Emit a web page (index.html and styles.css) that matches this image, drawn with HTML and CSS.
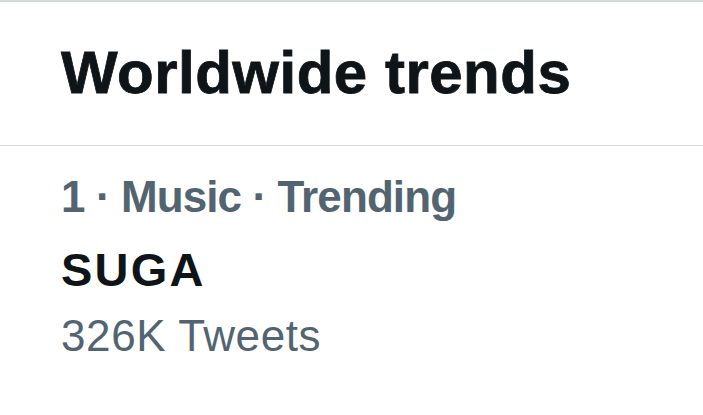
FILE: index.html
```html
<!DOCTYPE html>
<html>
<head>
<meta charset="utf-8">
<link rel="stylesheet" href="styles.css">
</head>
<body>
<div class="panel">
  <header class="panel-head">
    <h1 class="title">Worldwide trends</h1>
  </header>
  <section class="trend">
    <div class="meta">1 · Music · Trending</div>
    <div class="name">SUGA</div>
    <div class="count">326K Tweets</div>
  </section>
</div>
</body>
</html>
```
FILE: styles.css
```css
html, body {
  margin: 0;
  padding: 0;
  background: #ffffff;
}
body {
  font-family: "Liberation Sans", Arial, sans-serif;
  width: 703px;
  height: 415px;
  overflow: hidden;
}
.panel {
  border-top: 2px solid #d3d8dc;
}
.panel-head {
  padding: 41px 0 42px 61px;
  border-bottom: 1px solid #d3d7da;
}
.title {
  margin: 0;
  font-size: 60px;
  line-height: 60px;
  font-weight: 700;
  color: #0f1419;
  letter-spacing: 0.5px;
  -webkit-text-stroke: 0.8px #0f1419;
}
.trend {
  padding: 25px 0 0 61px;
}
.meta {
  font-size: 44px;
  line-height: 52px;
  font-weight: 700;
  color: #536471;
  letter-spacing: -0.9px;
}
.name {
  margin-top: 21px;
  font-size: 47px;
  line-height: 52px;
  font-weight: 700;
  color: #0f1419;
  letter-spacing: 2.2px;
}
.count {
  margin-top: 14px;
  font-size: 44px;
  line-height: 52px;
  font-weight: 400;
  color: #536471;
  letter-spacing: 0.6px;
}
```
